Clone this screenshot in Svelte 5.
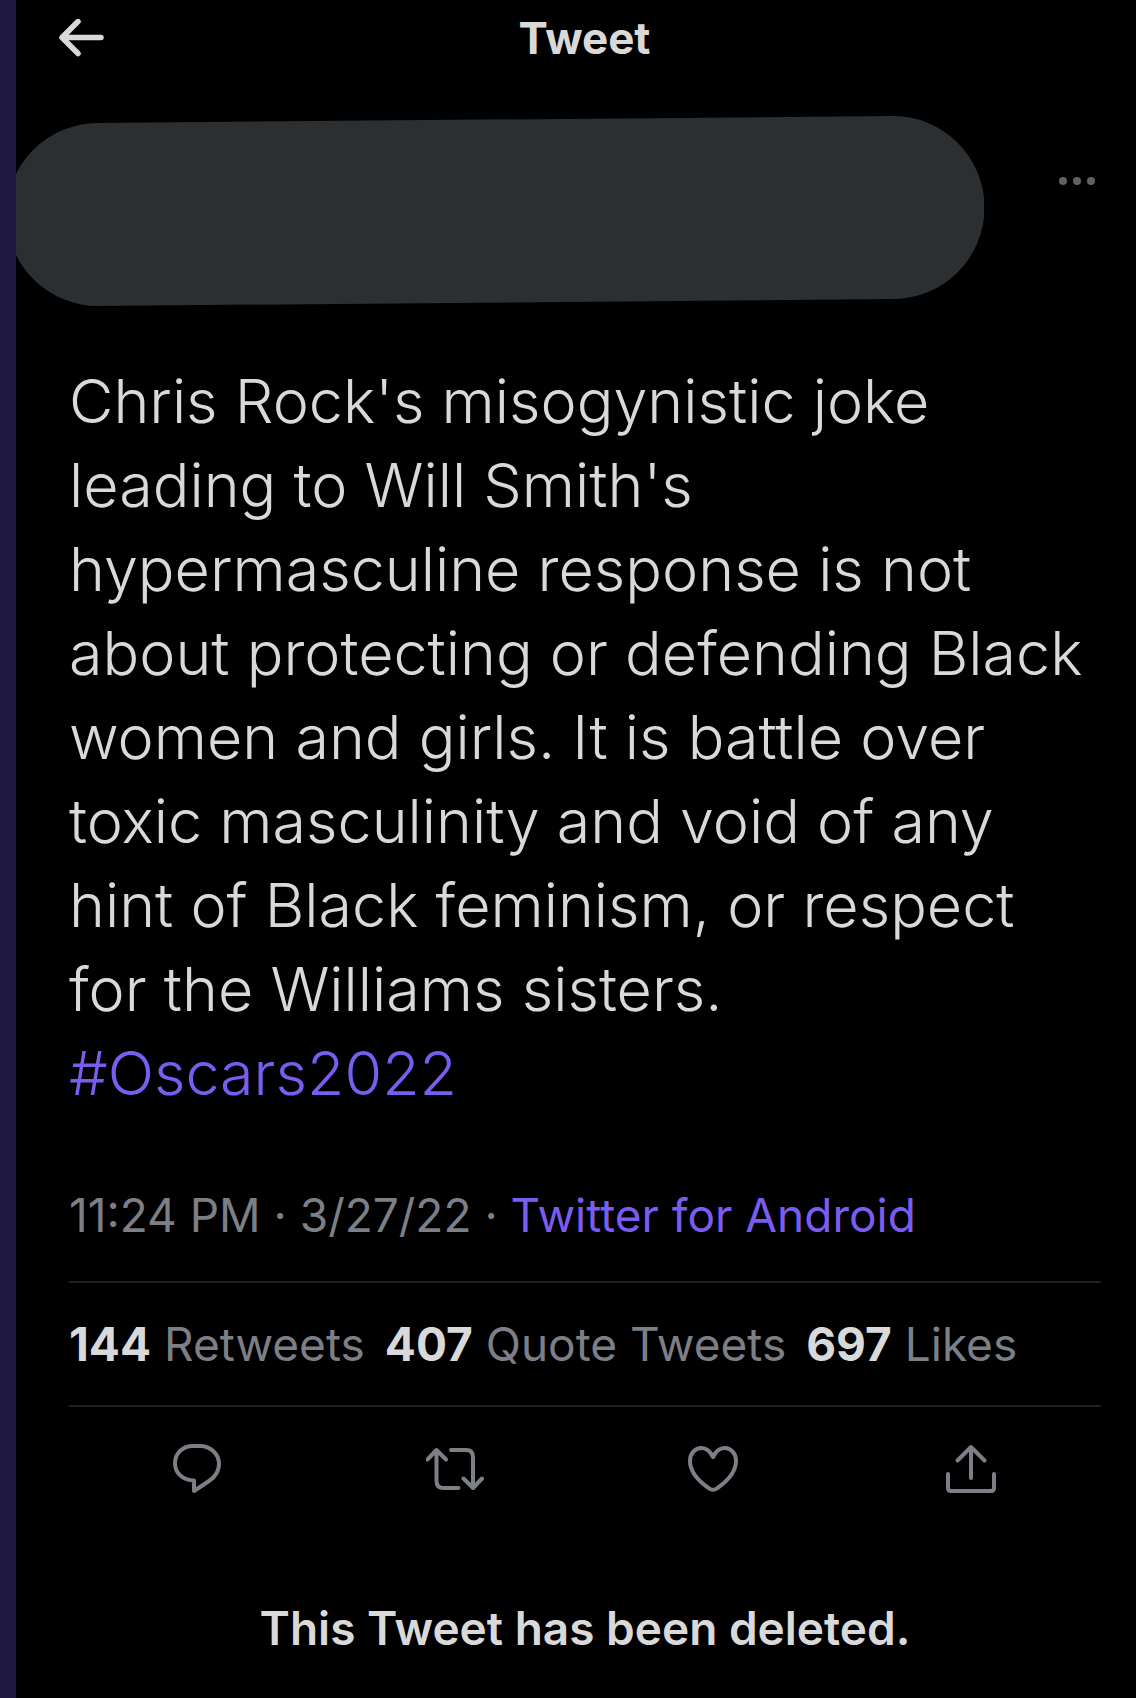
<script lang="ts">
	const lines = [
		"Chris Rock's misogynistic joke",
		"leading to Will Smith's",
		'hypermasculine response is not',
		'about protecting or defending Black',
		'women and girls. It is battle over',
		'toxic masculinity and void of any',
		'hint of Black feminism, or respect',
		'for the Williams sisters.'
	];

	const stats = [
		{ count: 144, label: 'Retweets' },
		{ count: 407, label: 'Quote Tweets' },
		{ count: 697, label: 'Likes' }
	];
</script>

<svelte:head>
	<title>Tweet</title>
</svelte:head>

<main class="screen">
	<header class="top-bar">
		<button class="icon-btn" aria-label="Back">
			<svg width="46" height="38" viewBox="0 0 46 38">
				<path d="M20 2.500 4 18.500l16 16M5 18.500h38" stroke-width="5.500" />
			</svg>
		</button>
		<h1>Tweet</h1>
	</header>

	<div class="author">
		<!-- hidden name and avatar -->
		<svg class="redacted" viewBox="0 0 968 194" aria-hidden="true">
			<path d="M82 102.500 877 95.500" />
		</svg>
		<button class="icon-btn more" aria-label="More options">
			<svg width="40" height="12" viewBox="0 0 40 12">
				<circle cx="6" cy="6" r="4" />
				<circle cx="20" cy="6" r="4" />
				<circle cx="34" cy="6" r="4" />
			</svg>
		</button>
	</div>

	<article>
		<p class="text">
			{#each lines as line}
				{line}<br />
			{/each}
			<a href="#Oscars2022">#Oscars2022</a>
		</p>

		<p class="meta">11:24 PM · 3/27/22 · <a href="#source">Twitter for Android</a></p>

		<div class="stats">
			{#each stats as stat}
				<a href="#{stat.label}" class="stat"><strong>{stat.count}</strong> {stat.label}</a>
			{/each}
		</div>

		<div class="actions">
			<button class="icon-btn" aria-label="Reply">
				<svg width="60" height="52" viewBox="0 0 60 52">
					<path d="M25 4h7C42.500 4 51 12 51 22c0 7-4 13-10 17L26 49V38.500C15 38.500 7 31 7 21.500 7 11 15 4 25 4z" />
				</svg>
			</button>
			<button class="icon-btn" aria-label="Retweet">
				<svg width="60" height="52" viewBox="0 0 60 52">
					<path d="M1.500 17.500 10.500 8l9.500 9.500M10.500 9v30q0 7 7 7h15M25 8h15q7 0 7 7v30M37.500 36.500 47 46l9-9.500" />
				</svg>
			</button>
			<button class="icon-btn" aria-label="Like">
				<svg width="60" height="52" viewBox="0 0 60 52">
					<path d="M29 15C26 9 22 6 17.500 6 11 6 6 11.500 6 19c0 11 10 21 18.500 27Q29 49.500 33.500 46C42 40 52 30 52 19 52 11.500 47 6 40.500 6 36 6 32 9 29 15z" />
				</svg>
			</button>
			<button class="icon-btn" aria-label="Share">
				<svg width="60" height="52" viewBox="0 0 60 52">
					<path d="M29 36V5M15.500 18.500 29 5l13.500 13.500M6 32v14q0 3 3 3h40q3 0 3-3V32" />
				</svg>
			</button>
		</div>
	</article>

	<p class="deleted">This Tweet has been deleted.</p>
</main>

<style>
	:global(body) {
		margin: 0;
		background: #000;
	}

	.screen {
		box-sizing: border-box;
		min-height: 100vh;
		border-left: 16px solid #1f1840;
		background: #000;
		color: #d9d9d9;
		font-family: Inter, 'Liberation Sans', sans-serif;
	}

	h1,
	p {
		margin: 0;
	}

	a {
		color: #7a5cf0;
		text-decoration: none;
	}

	.icon-btn {
		display: flex;
		padding: 0;
		border: 0;
		background: none;
		color: inherit;
		cursor: pointer;
	}

	.icon-btn path {
		fill: none;
		stroke: currentColor;
		stroke-linecap: round;
		stroke-linejoin: round;
	}

	.top-bar {
		display: grid;
		grid-template-columns: 46px 1fr 46px;
		align-items: center;
		height: 76px;
		padding: 0 25px 36px 42px;
	}

	h1 {
		font-size: 44px;
		line-height: 76px;
		font-weight: 700;
		text-align: center;
	}

	.author {
		display: flex;
		justify-content: space-between;
		align-items: flex-start;
		padding-right: 39px;
	}

	.redacted {
		flex: 0 1 968px;
		min-width: 0;
	}

	.redacted path {
		stroke: #2b2f32;
		stroke-width: 183;
		stroke-linecap: round;
	}

	.more {
		padding-top: 63px;
		color: #5f6063;
		fill: currentColor;
	}

	article {
		padding: 53px 35px 0 53px;
	}

	.text {
		font-size: 61px;
		line-height: 84px;
		font-weight: 350;
	}

	.meta {
		padding: 66px 0 32px;
		border-bottom: 2px solid #202022;
		color: #7c7f85;
		font-size: 46px;
		line-height: 68px;
	}

	.stats {
		display: flex;
		gap: 20px;
		padding: 27px 0;
		border-bottom: 2px solid #202022;
		font-size: 46px;
		line-height: 68px;
		white-space: nowrap;
	}

	.stat {
		color: #7c7f85;
	}

	.stat strong {
		color: #d9d9d9;
		font-weight: 700;
	}

	.actions {
		display: grid;
		grid-template-columns: repeat(4, 1fr);
		justify-items: center;
		padding-top: 35px;
		color: #7c7f85;
	}

	.actions path {
		stroke-width: 4;
	}

	.deleted {
		padding: 100px 35px 32px 53px;
		font-size: 46px;
		line-height: 68px;
		font-weight: 600;
		text-align: center;
	}
</style>
